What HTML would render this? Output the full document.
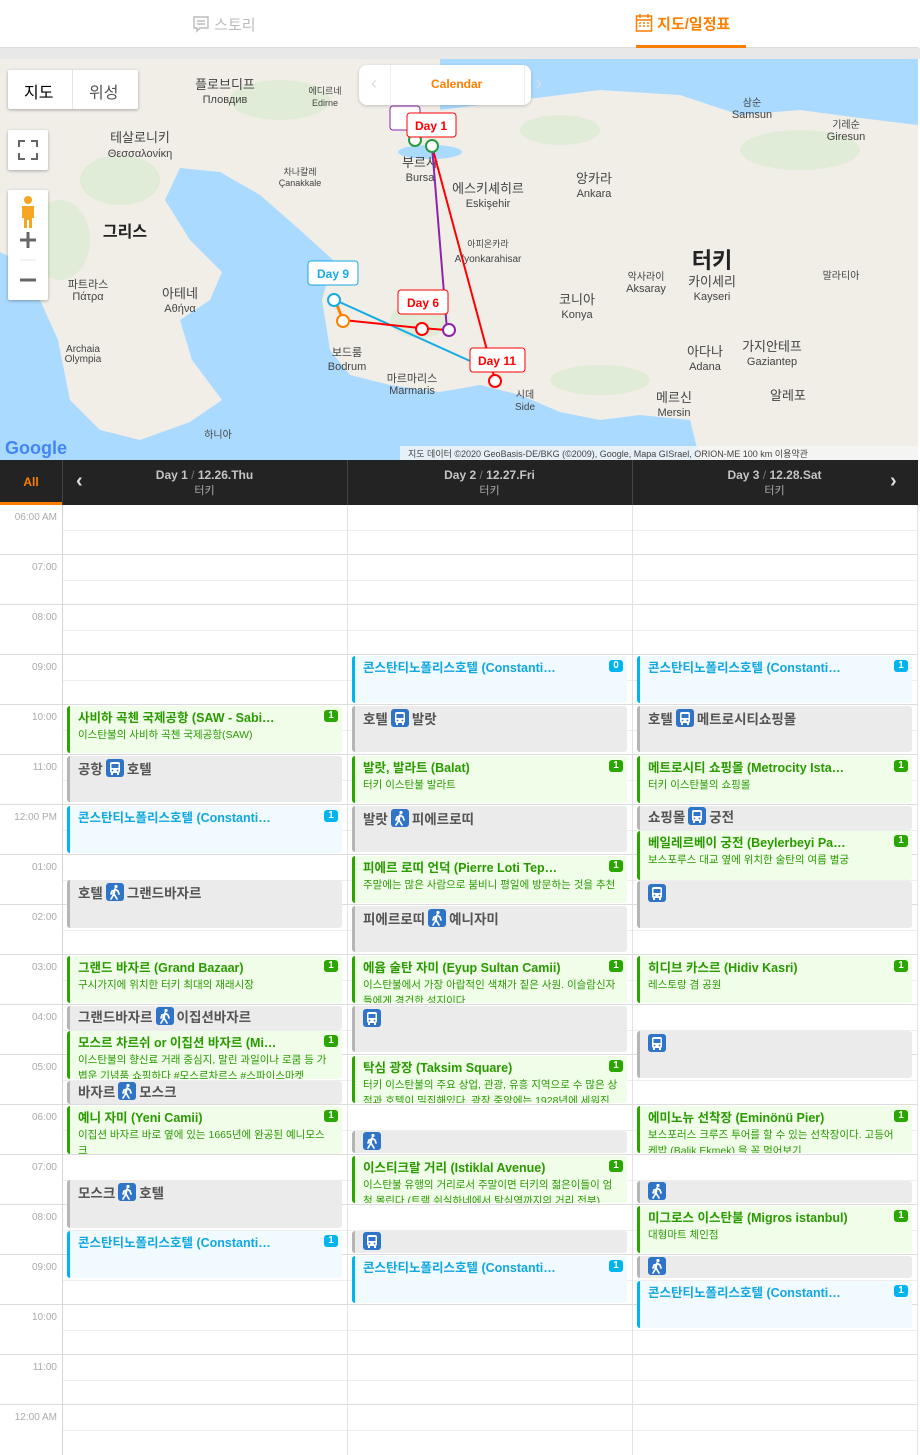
<!DOCTYPE html>
<html><head><meta charset="utf-8">
<style>
*{box-sizing:border-box;margin:0;padding:0}
body{width:920px;height:1455px;overflow:hidden;background:#fff;font-family:"Liberation Sans","Noto Sans CJK KR",sans-serif;position:relative}
.a{position:absolute}
.tabs{left:0;top:0;width:918px;height:48px;background:#fff;border-bottom:1px solid #ddd}
.gb{left:0;top:48px;width:920px;height:11px;background:#e8e8e8}
.hdr{left:0;top:460px;width:918px;height:45px;background:#232323}
.dh{color:#c4c4c4;font-weight:bold;font-size:12px;text-align:center;line-height:16px}
.dh small{display:block;font-weight:normal;font-size:11px;color:#aaa}
.tl{font-size:10px;color:#aaa;width:57px;text-align:right}
.hl{left:0;width:918px;height:1px;background:#dcdcdc}
.hh{left:62px;width:856px;height:1px;background:#eee}
.vl{width:1px;background:#e2e2e2;top:505px;height:950px}
.ev{position:absolute;border-left:3px solid;border-radius:3px;overflow:hidden;padding:3px 8px 0 8px}
.g{background:#effde9;border-color:#2ba500;color:#2a9a00}
.b{background:#f1faff;border-color:#00b4ee;color:#11a7e0}
.y{background:#ebebeb;border-color:#b5b5b5;color:#555}
.t{font-size:12.5px;font-weight:bold;line-height:18px;white-space:nowrap}
.y .t{font-size:13.5px;line-height:20px}
.d{font-size:10.5px;line-height:16px}
.bd{position:absolute;right:4px;top:4px;font-size:10px;color:#fff;border-radius:3px;width:14px;height:12px;line-height:12px;text-align:center;font-weight:bold}
.g .bd{background:#2ba500}.b .bd{background:#00b4ee}
.ic{display:inline-block;width:18px;height:18px;background:#2f74c6;border-radius:3px;vertical-align:-3px;margin:0 3px;position:relative}
</style></head><body>
<div class="a tabs">
 <div class="a" style="left:192px;top:14px;font-size:15px;color:#bbb">
  <svg width="18" height="18" viewBox="0 0 18 18" style="vertical-align:-3px"><path d="M2 2h14v11H8l-3 3v-3H2z M5 6h8 M5 9h8" fill="none" stroke="#bbb" stroke-width="1.4"/></svg> 스토리</div>
 <div class="a" style="left:635px;top:13px;font-size:15px;color:#ff7e00;font-weight:bold">
  <svg width="18" height="20" viewBox="0 0 18 20" style="vertical-align:-4px"><rect x="1.5" y="3" width="15" height="15" fill="none" stroke="#ff7e00" stroke-width="1.5"/><path d="M1.5 7h15M5 1v4M13 1v4M4 10h2M8 10h2M12 10h2M4 13h2M8 13h2M12 13h2" stroke="#ff7e00" stroke-width="1.5"/></svg> 지도/일정표</div>
 <div class="a" style="left:636px;top:45px;width:110px;height:3px;background:#ff7e00"></div>
</div>
<div class="a gb"></div>
<svg class="a" style="left:0;top:59px" width="918" height="401" viewBox="0 59 918 401">
<rect x="0" y="59" width="918" height="401" fill="#aadaff"/>
<path d="M0,59 L440,59 L440,110 L520,100 L600,90 L680,95 L740,115 L800,110 L860,118 L918,125 L918,460 L700,460 L690,420 L640,415 L600,420 L560,412 L520,395 L480,385 L440,392 L390,385 L350,375 L330,350 L322,300 L333,260 L300,230 L260,195 L220,172 L180,168 L165,200 L190,240 L222,272 L210,300 L180,320 L192,360 L222,400 L190,422 L140,440 L100,430 L70,400 L58,340 L40,300 L20,262 L0,252 Z" fill="#f1eee8"/>
<path d="M395,59 L440,59 L440,110 L420,118 L400,100 Z" fill="#f1eee8"/>
<ellipse cx="430" cy="152" rx="32" ry="7" fill="#aadaff"/>
<g fill="#d6ebcc" opacity=".6"><ellipse cx="120" cy="180" rx="40" ry="25"/><ellipse cx="60" cy="240" rx="30" ry="40"/><ellipse cx="280" cy="100" rx="50" ry="20"/><ellipse cx="560" cy="130" rx="40" ry="15"/><ellipse cx="800" cy="150" rx="60" ry="20"/><ellipse cx="420" cy="320" rx="30" ry="18"/><ellipse cx="600" cy="380" rx="50" ry="15"/></g>
<g font-family="Liberation Sans,Noto Sans CJK KR,sans-serif" fill="#444" font-size="11" text-anchor="middle">
<text x="225" y="89" font-size="13">플로브디프</text><text x="225" y="103">Пловдив</text>
<text x="325" y="94" font-size="9">에디르네</text><text x="325" y="106" font-size="9">Edirne</text>
<text x="140" y="142" font-size="13">테살로니키</text><text x="140" y="157">Θεσσαλονίκη</text>
<text x="300" y="175" font-size="9">차나칼레</text><text x="300" y="186" font-size="9">Çanakkale</text>
<text x="488" y="193" font-size="13">에스키셰히르</text><text x="488" y="207">Eskişehir</text>
<text x="594" y="183" font-size="13">앙카라</text><text x="594" y="197">Ankara</text>
<text x="752" y="106" font-size="10">삼순</text><text x="752" y="118">Samsun</text>
<text x="846" y="128" font-size="10">기레순</text><text x="846" y="140">Giresun</text>
<text x="125" y="237" font-size="16" font-weight="bold" fill="#222">그리스</text>
<text x="712" y="268" font-size="22" font-weight="bold" fill="#222">터키</text>
<text x="712" y="286" font-size="13">카이세리</text><text x="712" y="300">Kayseri</text>
<text x="577" y="304" font-size="13">코니아</text><text x="577" y="318">Konya</text>
<text x="646" y="280" font-size="10">악사라이</text><text x="646" y="292">Aksaray</text>
<text x="488" y="247" font-size="9">아피온카라</text><text x="488" y="262" font-size="10">Afyonkarahisar</text>
<text x="180" y="298" font-size="13">아테네</text><text x="180" y="312">Αθήνα</text>
<text x="88" y="288">파트라스</text><text x="88" y="300">Πάτρα</text>
<text x="83" y="352" font-size="10">Archaia</text><text x="83" y="362" font-size="10">Olympia</text>
<text x="347" y="356">보드룸</text><text x="347" y="370">Bodrum</text>
<text x="412" y="382">마르마리스</text><text x="412" y="394">Marmaris</text>
<text x="705" y="356" font-size="13">아다나</text><text x="705" y="370">Adana</text>
<text x="772" y="351" font-size="13">가지안테프</text><text x="772" y="365">Gaziantep</text>
<text x="674" y="402" font-size="13">메르신</text><text x="674" y="416">Mersin</text>
<text x="788" y="400" font-size="13">알레포</text>
<text x="420" y="167" font-size="13">부르사</text><text x="420" y="181">Bursa</text>
<text x="525" y="398" font-size="10">시데</text><text x="525" y="410" font-size="10">Side</text>
<text x="218" y="438" font-size="10">하니아</text><text x="841" y="279" font-size="10">말라티아</text>
</g>
<g fill="none" stroke-width="2"><path d="M432,146 L495,380" stroke="#f00"/><path d="M432,146 L447,330" stroke="#8e24aa"/><path d="M335,300 L490,370" stroke="#18abe3"/><path d="M343,320 L420,328 L447,330" stroke="#f00"/><path d="M335,300 L343,320" stroke="#ff8000" stroke-width="3"/></g>
<g fill="#fff" stroke-width="2"><circle cx="415" cy="140" r="6" stroke="#2a9a40"/><circle cx="432" cy="146" r="6" stroke="#2a9a40"/><circle cx="343" cy="321" r="6" stroke="#ff8000"/><circle cx="334" cy="300" r="6" stroke="#18abe3"/><circle cx="422" cy="329" r="6" stroke="#f00"/><circle cx="449" cy="330" r="6" stroke="#8e24aa"/><circle cx="495" cy="381" r="6" stroke="#f00"/></g>
<g font-family="Liberation Sans,sans-serif" font-size="12" font-weight="bold" text-anchor="middle">
<rect x="390" y="106" width="30" height="24" rx="3" fill="#fff" stroke="#8e24aa"/>
<rect x="407" y="113" width="49" height="24" rx="3" fill="#fff" stroke="#f00"/><text x="431" y="130" fill="#f00">Day 1</text>
<rect x="308" y="261" width="50" height="24" rx="3" fill="#fff" stroke="#18abe3"/><text x="333" y="278" fill="#18abe3">Day 9</text>
<rect x="398" y="290" width="50" height="24" rx="3" fill="#fff" stroke="#f00"/><text x="423" y="307" fill="#f00">Day 6</text>
<rect x="470" y="348" width="55" height="24" rx="3" fill="#fff" stroke="#f00"/><text x="497" y="365" fill="#f00">Day 11</text>
</g>
<text x="5" y="454" font-family="Liberation Sans,sans-serif" font-size="18" font-weight="bold" fill="#4285f4">Google</text>
<rect x="400" y="446" width="518" height="14" fill="#f5f5f5" opacity=".8"/>
<text x="408" y="457" font-family="Liberation Sans,Noto Sans CJK KR,sans-serif" font-size="9" fill="#444">지도 데이터 ©2020 GeoBasis-DE/BKG (©2009), Google, Mapa GISrael, ORION-ME    100 km          이용약관</text>
</svg>
<div class="a" style="left:8px;top:70px;width:130px;height:39px;background:#fff;box-shadow:0 1px 3px rgba(0,0,0,.3);border-radius:2px;font-size:16px">
 <span class="a" style="left:16px;top:9px;color:#000">지도</span><span class="a" style="left:64px;top:0;width:1px;height:39px;background:#e6e6e6"></span><span class="a" style="left:81px;top:9px;color:#555">위성</span></div>
<div class="a" style="left:8px;top:130px;width:40px;height:40px;background:#fff;box-shadow:0 1px 3px rgba(0,0,0,.3);border-radius:2px"><svg width="40" height="40"><path d="M11 17v-6h6M23 11h6v6M29 23v6h-6M17 29h-6v-6" fill="none" stroke="#666" stroke-width="2"/></svg></div>
<div class="a" style="left:8px;top:190px;width:40px;height:110px;background:#fff;box-shadow:0 1px 3px rgba(0,0,0,.3);border-radius:2px"><svg width="40" height="110"><circle cx="20" cy="10" r="4" fill="#f5a623"/><path d="M14 16h12v12h-2v10h-3v-8h-2v8h-3V28h-2z" fill="#f5a623"/><path d="M12 50h16M20 42v16M12 90h16" stroke="#666" stroke-width="3"/><path d="M12 70h16" stroke="#e6e6e6"/></svg></div>
<div class="a" style="left:359px;top:65px;width:172px;height:40px;background:#fff;border-radius:8px;box-shadow:0 1px 3px rgba(0,0,0,.2)"><span class="a" style="left:12px;top:8px;color:#ddd;font-size:18px">‹</span><span class="a" style="left:31px;top:0;width:1px;height:40px;background:#eee"></span><span class="a" style="left:72px;top:12px;color:#ff7e00;font-weight:bold;font-size:12px">Calendar</span><span class="a" style="left:165px;top:0;width:1px;height:40px;background:#eee"></span><span class="a" style="left:177px;top:8px;color:#ddd;font-size:18px">›</span></div>

<div class="a hdr">
 <div class="a" style="left:0;top:0;width:62px;height:45px;border-bottom:3px solid #ff7e00;color:#ff7e00;font-weight:bold;font-size:12px;text-align:center;line-height:45px">All</div>
 <div class="a" style="left:62px;top:0;width:1px;height:45px;background:#444"></div>
 <div class="a" style="left:347px;top:0;width:1px;height:45px;background:#444"></div>
 <div class="a" style="left:632px;top:0;width:1px;height:45px;background:#444"></div>
 <div class="a" style="left:76px;top:10px;color:#ddd;font-size:20px;font-weight:bold">‹</div>
 <div class="a" style="left:890px;top:10px;color:#ddd;font-size:20px;font-weight:bold">›</div>
 <div class="a dh" style="left:62px;top:7px;width:285px">Day 1 <span style="color:#777;font-weight:normal">/</span> 12.26.Thu<small>터키</small></div>
 <div class="a dh" style="left:347px;top:7px;width:285px">Day 2 <span style="color:#777;font-weight:normal">/</span> 12.27.Fri<small>터키</small></div>
 <div class="a dh" style="left:632px;top:7px;width:285px">Day 3 <span style="color:#777;font-weight:normal">/</span> 12.28.Sat<small>터키</small></div>
</div>

<div class="a hh" style="top:530px"></div><div class="a hh" style="top:580px"></div><div class="a hh" style="top:630px"></div><div class="a hh" style="top:680px"></div><div class="a hh" style="top:730px"></div><div class="a hh" style="top:780px"></div><div class="a hh" style="top:830px"></div><div class="a hh" style="top:880px"></div><div class="a hh" style="top:930px"></div><div class="a hh" style="top:980px"></div><div class="a hh" style="top:1030px"></div><div class="a hh" style="top:1080px"></div><div class="a hh" style="top:1130px"></div><div class="a hh" style="top:1180px"></div><div class="a hh" style="top:1230px"></div><div class="a hh" style="top:1280px"></div><div class="a hh" style="top:1330px"></div><div class="a hh" style="top:1380px"></div><div class="a hh" style="top:1430px"></div>
<div class="a hl" style="top:554px"></div><div class="a hl" style="top:604px"></div><div class="a hl" style="top:654px"></div><div class="a hl" style="top:704px"></div><div class="a hl" style="top:754px"></div><div class="a hl" style="top:804px"></div><div class="a hl" style="top:854px"></div><div class="a hl" style="top:904px"></div><div class="a hl" style="top:954px"></div><div class="a hl" style="top:1004px"></div><div class="a hl" style="top:1054px"></div><div class="a hl" style="top:1104px"></div><div class="a hl" style="top:1154px"></div><div class="a hl" style="top:1204px"></div><div class="a hl" style="top:1254px"></div><div class="a hl" style="top:1304px"></div><div class="a hl" style="top:1354px"></div><div class="a hl" style="top:1404px"></div>
<div class="a vl" style="left:62px;background:#d5d5d5"></div><div class="a vl" style="left:347px"></div><div class="a vl" style="left:632px"></div><div class="a vl" style="left:917px"></div>
<div class="a tl" style="top:512px">06:00 AM</div><div class="a tl" style="top:562px">07:00</div><div class="a tl" style="top:612px">08:00</div><div class="a tl" style="top:662px">09:00</div><div class="a tl" style="top:712px">10:00</div><div class="a tl" style="top:762px">11:00</div><div class="a tl" style="top:812px">12:00 PM</div><div class="a tl" style="top:862px">01:00</div><div class="a tl" style="top:912px">02:00</div><div class="a tl" style="top:962px">03:00</div><div class="a tl" style="top:1012px">04:00</div><div class="a tl" style="top:1062px">05:00</div><div class="a tl" style="top:1112px">06:00</div><div class="a tl" style="top:1162px">07:00</div><div class="a tl" style="top:1212px">08:00</div><div class="a tl" style="top:1262px">09:00</div><div class="a tl" style="top:1312px">10:00</div><div class="a tl" style="top:1362px">11:00</div><div class="a tl" style="top:1412px">12:00 AM</div>

<svg width="0" height="0" style="position:absolute"><defs>
<g id="bus"><rect x="4" y="3" width="10" height="11" rx="2" fill="#fff"/><rect x="5.5" y="5" width="7" height="4" fill="#2f74c6"/><rect x="5" y="14" width="2" height="2" fill="#fff"/><rect x="11" y="14" width="2" height="2" fill="#fff"/><circle cx="6.5" cy="11.5" r=".9" fill="#2f74c6"/><circle cx="11.5" cy="11.5" r=".9" fill="#2f74c6"/></g>
<g id="walk"><circle cx="10" cy="3.5" r="1.6" fill="#fff"/><path d="M9 6l-2 5M9 6l3 2 1 3M9 6l-1 5 3 5M8 11l-3 5M9 7l-3 1-1 3" stroke="#fff" stroke-width="1.7" fill="none" stroke-linecap="round"/></g>
</defs></svg>

<div class="ev g" style="left:67px;top:706px;width:275px;height:47px"><div class="t">사비하 곡첸 국제공항 (SAW - Sabi…</div><div class="d">이스탄불의 사비하 곡첸 국제공항(SAW)</div><span class="bd">1</span></div>
<div class="ev y" style="left:67px;top:756px;width:275px;height:46px"><div class="t">공항<span class="ic"><svg width="18" height="18"><use href="#bus"/></svg></span>호텔</div></div>
<div class="ev b" style="left:67px;top:806px;width:275px;height:47px"><div class="t">콘스탄티노폴리스호텔 (Constanti…</div><span class="bd">1</span></div>
<div class="ev y" style="left:67px;top:880px;width:275px;height:48px"><div class="t">호텔<span class="ic"><svg width="18" height="18"><use href="#walk"/></svg></span>그랜드바자르</div></div>
<div class="ev g" style="left:67px;top:956px;width:275px;height:47px"><div class="t">그랜드 바자르 (Grand Bazaar)</div><div class="d">구시가지에 위치한 터키 최대의 재래시장</div><span class="bd">1</span></div>
<div class="ev y" style="left:67px;top:1006px;width:275px;height:24px;padding-top:1px"><div class="t">그랜드바자르<span class="ic"><svg width="18" height="18"><use href="#walk"/></svg></span>이집션바자르</div></div>
<div class="ev g" style="left:67px;top:1031px;width:275px;height:48px"><div class="t">모스르 차르쉬 or 이집션 바자르 (Mi…</div><div class="d">이스탄불의 향신료 거래 중심지, 말린 과일이나 로쿰 등 가볍운 기념품 쇼핑하다 #모스르차르스 #스파이스마켓</div><span class="bd">1</span></div>
<div class="ev y" style="left:67px;top:1081px;width:275px;height:23px;padding-top:1px"><div class="t">바자르<span class="ic"><svg width="18" height="18"><use href="#walk"/></svg></span>모스크</div></div>
<div class="ev g" style="left:67px;top:1106px;width:275px;height:48px"><div class="t">예니 자미 (Yeni Camii)</div><div class="d">이집션 바자르 바로 옆에 있는 1665년에 완공된 예니모스크</div><span class="bd">1</span></div>
<div class="ev y" style="left:67px;top:1180px;width:275px;height:48px"><div class="t">모스크<span class="ic"><svg width="18" height="18"><use href="#walk"/></svg></span>호텔</div></div>
<div class="ev b" style="left:67px;top:1231px;width:275px;height:47px"><div class="t">콘스탄티노폴리스호텔 (Constanti…</div><span class="bd">1</span></div>

<div class="ev b" style="left:352px;top:656px;width:275px;height:47px"><div class="t">콘스탄티노폴리스호텔 (Constanti…</div><span class="bd">0</span></div>
<div class="ev y" style="left:352px;top:706px;width:275px;height:46px"><div class="t">호텔<span class="ic"><svg width="18" height="18"><use href="#bus"/></svg></span>발랏</div></div>
<div class="ev g" style="left:352px;top:756px;width:275px;height:47px"><div class="t">발랏, 발라트 (Balat)</div><div class="d">터키 이스탄불 발라트</div><span class="bd">1</span></div>
<div class="ev y" style="left:352px;top:806px;width:275px;height:46px"><div class="t">발랏<span class="ic"><svg width="18" height="18"><use href="#walk"/></svg></span>피에르로띠</div></div>
<div class="ev g" style="left:352px;top:856px;width:275px;height:47px"><div class="t">피에르 로띠 언덕 (Pierre Loti Tep…</div><div class="d">주말에는 많은 사람으로 붐비니 평일에 방문하는 것을 추천</div><span class="bd">1</span></div>
<div class="ev y" style="left:352px;top:906px;width:275px;height:46px"><div class="t">피에르로띠<span class="ic"><svg width="18" height="18"><use href="#walk"/></svg></span>예니자미</div></div>
<div class="ev g" style="left:352px;top:956px;width:275px;height:47px"><div class="t">에윱 술탄 자미 (Eyup Sultan Camii)</div><div class="d">이스탄불에서 가장 아랍적인 색채가 짙은 사원. 이슬람신자들에게 경건한 성지이다</div><span class="bd">1</span></div>
<div class="ev y" style="left:352px;top:1006px;width:275px;height:46px"><div class="t"><span class="ic" style="margin-left:0"><svg width="18" height="18"><use href="#bus"/></svg></span></div></div>
<div class="ev g" style="left:352px;top:1056px;width:275px;height:47px"><div class="t">탁심 광장 (Taksim Square)</div><div class="d">터키 이스탄불의 주요 상업, 관광, 유흥 지역으로 수 많은 상점과 호텔이 밀집해있다. 광장 중앙에는 1928년에 세워진</div><span class="bd">1</span></div>
<div class="ev y" style="left:352px;top:1131px;width:275px;height:22px;padding-top:1px"><div class="t"><span class="ic" style="margin-left:0"><svg width="18" height="18"><use href="#walk"/></svg></span></div></div>
<div class="ev g" style="left:352px;top:1156px;width:275px;height:47px"><div class="t">이스티크랄 거리 (Istiklal Avenue)</div><div class="d">이스탄불 유행의 거리로서 주말이면 터키의 젊은이들이 엄청 몰린다 (트램 쉬실하네에서 탁심역까지의 거리 전부)</div><span class="bd">1</span></div>
<div class="ev y" style="left:352px;top:1231px;width:275px;height:22px;padding-top:1px"><div class="t"><span class="ic" style="margin-left:0"><svg width="18" height="18"><use href="#bus"/></svg></span></div></div>
<div class="ev b" style="left:352px;top:1256px;width:275px;height:47px"><div class="t">콘스탄티노폴리스호텔 (Constanti…</div><span class="bd">1</span></div>

<div class="ev b" style="left:637px;top:656px;width:275px;height:47px"><div class="t">콘스탄티노폴리스호텔 (Constanti…</div><span class="bd">1</span></div>
<div class="ev y" style="left:637px;top:706px;width:275px;height:46px"><div class="t">호텔<span class="ic"><svg width="18" height="18"><use href="#bus"/></svg></span>메트로시티쇼핑몰</div></div>
<div class="ev g" style="left:637px;top:756px;width:275px;height:47px"><div class="t">메트로시티 쇼핑몰 (Metrocity Ista…</div><div class="d">터키 이스탄불의 쇼핑몰</div><span class="bd">1</span></div>
<div class="ev y" style="left:637px;top:806px;width:275px;height:24px;padding-top:1px"><div class="t">쇼핑몰<span class="ic"><svg width="18" height="18"><use href="#bus"/></svg></span>궁전</div></div>
<div class="ev g" style="left:637px;top:831px;width:275px;height:49px"><div class="t">베일레르베이 궁전 (Beylerbeyi Pa…</div><div class="d">보스포루스 대교 옆에 위치한 술탄의 여름 별궁</div><span class="bd">1</span></div>
<div class="ev y" style="left:637px;top:881px;width:275px;height:47px"><div class="t"><span class="ic" style="margin-left:0"><svg width="18" height="18"><use href="#bus"/></svg></span></div></div>
<div class="ev g" style="left:637px;top:956px;width:275px;height:47px"><div class="t">히디브 카스르 (Hidiv Kasri)</div><div class="d">레스토랑 겸 공원</div><span class="bd">1</span></div>
<div class="ev y" style="left:637px;top:1031px;width:275px;height:47px"><div class="t"><span class="ic" style="margin-left:0"><svg width="18" height="18"><use href="#bus"/></svg></span></div></div>
<div class="ev g" style="left:637px;top:1106px;width:275px;height:47px"><div class="t">에미노뉴 선착장 (Eminönü Pier)</div><div class="d">보스포러스 크루즈 투어를 할 수 있는 선착장이다. 고등어 케밥 (Balik Ekmek) 을 꼭 먹어보기</div><span class="bd">1</span></div>
<div class="ev y" style="left:637px;top:1181px;width:275px;height:22px;padding-top:1px"><div class="t"><span class="ic" style="margin-left:0"><svg width="18" height="18"><use href="#walk"/></svg></span></div></div>
<div class="ev g" style="left:637px;top:1206px;width:275px;height:47px"><div class="t">미그로스 이스탄불 (Migros istanbul)</div><div class="d">대형마트 체인점</div><span class="bd">1</span></div>
<div class="ev y" style="left:637px;top:1256px;width:275px;height:22px;padding-top:1px"><div class="t"><span class="ic" style="margin-left:0"><svg width="18" height="18"><use href="#walk"/></svg></span></div></div>
<div class="ev b" style="left:637px;top:1281px;width:275px;height:47px"><div class="t">콘스탄티노폴리스호텔 (Constanti…</div><span class="bd">1</span></div>
</body></html>
